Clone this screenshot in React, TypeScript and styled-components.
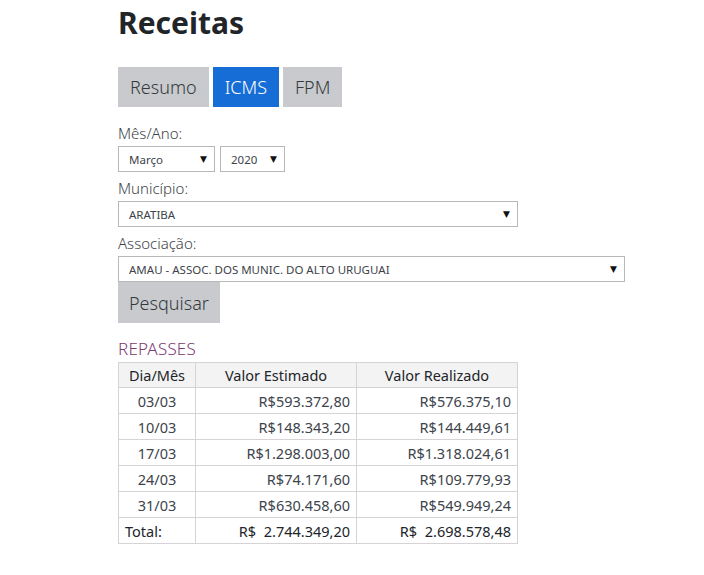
import React from "react";
import styled, { createGlobalStyle } from "styled-components";

const Global = createGlobalStyle`
  body {
    margin: 0;
    background: #ffffff;
    font-family: "Noto Sans", "Open Sans", sans-serif;
    color: #212529;
  }
`;

const Page = styled.div`
  padding: 0 0 0 118px;
  display: flex;
  flex-direction: column;
  align-items: flex-start;
`;

const Title = styled.h1`
  margin: 3px 0 0 0;
  font-size: 30px;
  font-weight: 700;
  line-height: 40px;
  color: #212529;
`;

const Tabs = styled.div`
  display: flex;
  gap: 4px;
  margin-top: 24px;
`;

const Tab = styled.button<{ $active?: boolean }>`
  height: 40px;
  padding: 0 12px;
  border: none;
  font-family: inherit;
  font-size: 18px;
  font-weight: 300;
  background: ${(p) => (p.$active ? "#166dd6" : "#c8cacd")};
  color: ${(p) => (p.$active ? "#ffffff" : "#343a40")};
`;

const Label = styled.div<{ $first?: boolean }>`
  margin-top: ${(p) => (p.$first ? 16 : 6)}px;
  font-size: 15px;
  font-weight: 300;
  line-height: 20px;
  color: #3d434a;
`;

const Row = styled.div`
  display: flex;
  gap: 5px;
`;

const SelectBox = styled.div<{ $w: number }>`
  position: relative;
  width: ${(p) => p.$w}px;
  height: 26px;
  box-sizing: border-box;
  border: 1px solid #b8b8b8;
  background: #fff;
  display: flex;
  align-items: center;
  padding-left: 10px;
  font-size: 11.5px;
  color: #3d434a;
  margin-top: 3px;
`;

const Arrow = styled.span`
  position: absolute;
  right: 7px;
  top: 50%;
  transform: translateY(-50%);
  font-size: 9px;
  color: #111;
  font-family: "DejaVu Sans", sans-serif;
`;

const SearchButton = styled.button`
  height: 41px;
  padding: 0 11px;
  border: none;
  background: #c8cacd;
  font-family: inherit;
  font-size: 18px;
  font-weight: 300;
  color: #343a40;
`;

const Section = styled.div`
  margin-top: 15px;
  font-size: 17px;
  font-weight: 300;
  color: #7b3a70;
  line-height: 22px;
  letter-spacing: 0.2px;
`;

const Table = styled.table`
  border-collapse: collapse;
  table-layout: fixed;
  width: 399px;
  font-size: 14.5px;
  font-weight: 300;
  color: #343a40;
  margin-top: 2px;
  margin-bottom: 30px;
`;

const Col = styled.col<{ $w: number }>`
  width: ${(p) => p.$w}px;
`;

const Th = styled.th`
  height: 24px;
  border: 1px solid #d6d2d6;
  background: #f3f3f3;
  font-weight: 400;
  padding: 0 6px;
  text-align: center;
  color: #212529;
`;

const Td = styled.td<{ $align: "left" | "center" | "right"; $strong?: boolean }>`
  height: 25px;
  border: 1px solid #d6d2d6;
  padding: 0 6px;
  text-align: ${(p) => p.$align};
  font-weight: 400;
  color: ${(p) => (p.$strong ? "#212529" : "#3d434a")};
  white-space: pre;
`;

const rows = [
  ["03/03", "R$593.372,80", "R$576.375,10"],
  ["10/03", "R$148.343,20", "R$144.449,61"],
  ["17/03", "R$1.298.003,00", "R$1.318.024,61"],
  ["24/03", "R$74.171,60", "R$109.779,93"],
  ["31/03", "R$630.458,60", "R$549.949,24"],
];

function Select({ w, value }: { w: number; value: string }) {
  return (
    <SelectBox $w={w}>
      {value}
      <Arrow>▼</Arrow>
    </SelectBox>
  );
}

export default function App() {
  return (
    <>
      <Global />
      <Page>
        <Title>Receitas</Title>
        <Tabs>
          <Tab>Resumo</Tab>
          <Tab $active>ICMS</Tab>
          <Tab>FPM</Tab>
        </Tabs>
        <Label $first>Mês/Ano:</Label>
        <Row>
          <Select w={97} value="Março" />
          <Select w={65} value="2020" />
        </Row>
        <Label>Município:</Label>
        <Select w={400} value="ARATIBA" />
        <Label>Associação:</Label>
        <Select w={507} value="AMAU - ASSOC. DOS MUNIC. DO ALTO URUGUAI" />
        <SearchButton>Pesquisar</SearchButton>
        <Section>REPASSES</Section>
        <Table>
          <colgroup>
            <Col $w={77} />
            <Col $w={161} />
            <Col $w={161} />
          </colgroup>
          <thead>
            <tr>
              <Th>Dia/Mês</Th>
              <Th>Valor Estimado</Th>
              <Th>Valor Realizado</Th>
            </tr>
          </thead>
          <tbody>
            {rows.map((r) => (
              <tr key={r[0]}>
                <Td $align="center">{r[0]}</Td>
                <Td $align="right">{r[1]}</Td>
                <Td $align="right">{r[2]}</Td>
              </tr>
            ))}
            <tr>
              <Td $align="left" $strong>Total:</Td>
              <Td $align="right" $strong>R$  2.744.349,20</Td>
              <Td $align="right" $strong>R$  2.698.578,48</Td>
            </tr>
          </tbody>
        </Table>
      </Page>
    </>
  );
}
